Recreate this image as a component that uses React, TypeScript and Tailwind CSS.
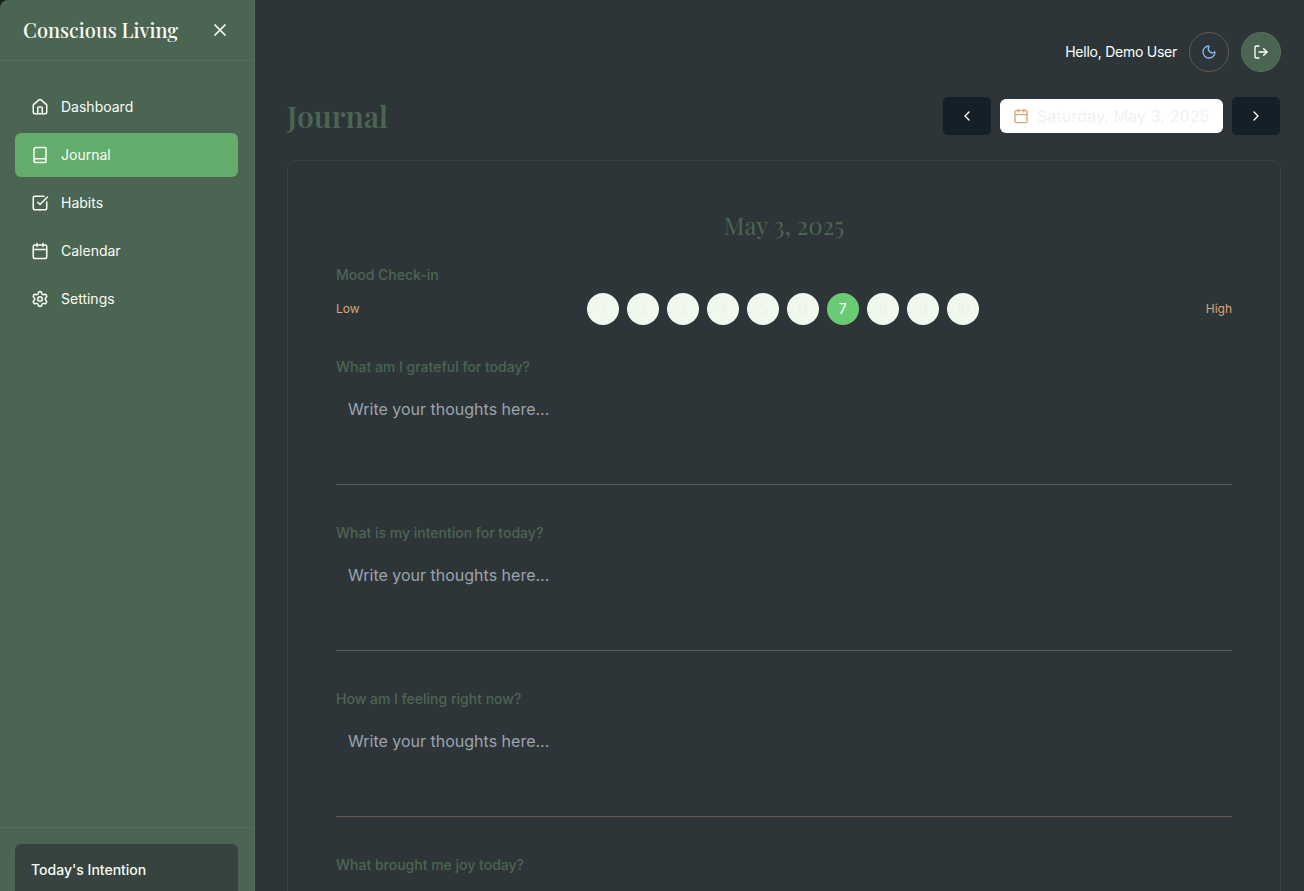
import React from "react";
import {
  House,
  Book,
  SquareCheckBig,
  Calendar,
  Settings,
  X,
  Moon,
  LogOut,
  ChevronLeft,
  ChevronRight,
} from "lucide-react";

const navItems = [
  { label: "Dashboard", icon: House },
  { label: "Journal", icon: Book, active: true },
  { label: "Habits", icon: SquareCheckBig },
  { label: "Calendar", icon: Calendar },
  { label: "Settings", icon: Settings },
];

const prompts = [
  { question: "What am I grateful for today?", line: "border-[#56605f]" },
  { question: "What is my intention for today?", line: "border-[#56605f]" },
  { question: "How am I feeling right now?", line: "border-[#66594e]" },
  { question: "What brought me joy today?", line: "border-[#56605f]" },
];

const serif = "font-['Playfair_Display','Liberation_Serif',serif]";

function Sidebar() {
  return (
    <aside className="flex h-full w-[255px] shrink-0 flex-col rounded-tl-lg border-r border-[#566e5c] bg-[#4c6553] text-[#f8fdf5]">
      <div className="flex h-[61px] shrink-0 items-center justify-between border-b border-[#546e5b] pr-6 pl-[23px]">
        <h1 className={`${serif} text-xl font-medium whitespace-nowrap`}>Conscious Living</h1>
        <X size={20} />
      </div>
      <nav className="flex flex-1 flex-col gap-1 pt-6 pr-4 pl-[15px]">
        {navItems.map(({ label, icon: Icon, active }) => (
          <a
            key={label}
            className={`flex h-11 items-center gap-3 rounded-md px-4 text-sm ${active ? "bg-[#63ac6b]" : ""}`}
          >
            <Icon size={18} />
            <span>{label}</span>
          </a>
        ))}
      </nav>
      <div className="h-16 shrink-0 overflow-hidden border-t border-[#546e5b] pt-4 pr-4 pl-[15px]">
        <div className="h-24 rounded-md bg-[#36433f] px-4 pt-4">
          <h2 className="text-sm font-medium">Today's Intention</h2>
        </div>
      </div>
    </aside>
  );
}

export default function App() {
  return (
    <div className="h-[891px] overflow-hidden bg-[#1c1f1e] font-['Inter',sans-serif]">
      <div className="flex h-full">
        <Sidebar />
        <main className="flex min-w-0 flex-1 flex-col bg-[#2d3538] pt-8 pr-[23px] pl-8">
          <div className="flex h-10 shrink-0 items-center justify-end gap-3">
            <span className="text-sm tracking-[-0.25px] text-white">Hello, Demo User</span>
            <button className="flex size-10 items-center justify-center rounded-full border border-[#62594f] text-[#8bb8e8]">
              <Moon size={16} />
            </button>
            <button className="flex size-10 items-center justify-center rounded-full border border-[#5a705e] bg-[#4c6553] text-white">
              <LogOut size={16} />
            </button>
          </div>

          <div className="mt-6 flex h-10 shrink-0 items-center justify-between">
            <h2 className={`${serif} text-3xl font-semibold text-[#4c6553]`}>Journal</h2>
            <div className="flex items-center gap-2">
              <button className="flex h-10 w-[50px] items-center justify-center rounded-md border border-[#2b3536] bg-[#151f28] text-white">
                <ChevronLeft size={16} />
              </button>
              <div className="flex h-[34px] w-[223px] items-center gap-2 rounded-md bg-white px-[13px]">
                <Calendar size={16} className="shrink-0 text-[#d9a679]" />
                <span className="text-base tracking-[0.1px] whitespace-nowrap text-[#f0f1f1]">
                  Saturday, May 3, 2025
                </span>
              </div>
              <button className="flex h-10 w-[50px] items-center justify-center rounded-md border border-[#2b3536] bg-[#151f28] text-white">
                <ChevronRight size={16} />
              </button>
            </div>
          </div>

          <section className="mt-6 flex h-[900px] shrink-0 flex-col rounded-lg border border-[#394243] px-12 pt-12">
            <h3 className={`${serif} text-center text-2xl text-[#4c6553]`}>May 3, 2025</h3>
            <h4 className="mt-6 text-sm font-medium text-[#4c6553]">Mood Check-in</h4>
            <div className="mt-2 flex h-8 items-center justify-between text-xs text-[#dda577]">
              <span>Low</span>
              <div className="flex gap-2">
                {[1, 2, 3, 4, 5, 6, 7, 8, 9, 10].map((n) => (
                  <button
                    key={n}
                    className={`flex size-8 items-center justify-center rounded-full text-sm ${
                      n === 7 ? "bg-[#6acb75] text-white" : "bg-[#f1f8ed] text-[#ecf3ec]"
                    }`}
                  >
                    {n}
                  </button>
                ))}
              </div>
              <span>High</span>
            </div>
            <div className="mt-8 flex flex-col gap-[38px]">
              {prompts.map(({ question, line }) => (
                <label key={question} className="flex flex-col gap-2">
                  <span className="text-sm font-medium text-[#4c6553]">{question}</span>
                  <textarea
                    placeholder="Write your thoughts here..."
                    className={`h-[100px] w-full resize-none border-b bg-transparent p-3 text-base placeholder:text-[#9ca3af] ${line}`}
                  />
                </label>
              ))}
            </div>
          </section>
        </main>
      </div>
    </div>
  );
}
